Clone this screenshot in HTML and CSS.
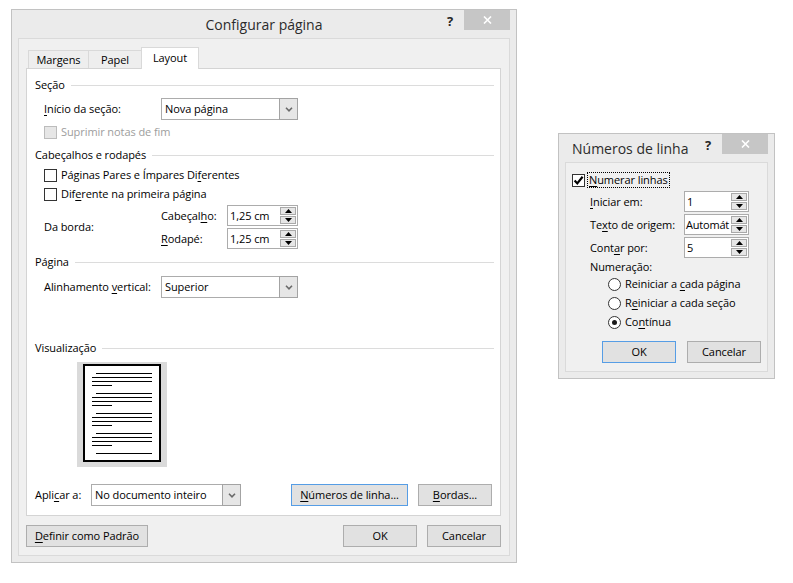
FILE: index.html
```html
<!DOCTYPE html>
<html lang="pt-BR">
<head>
<meta charset="utf-8">
<title>Configurar página</title>
<link rel="stylesheet" href="styles.css">
</head>
<body>
<div class="win win-main">
  <div class="titlebar">
    <div class="title title-center">Configurar página</div>
    <div class="cap-help">?</div>
    <div class="cap-close"><svg width="9" height="8" viewBox="0 0 9 8"><path d="M1 0.5 L8 7.5 M8 0.5 L1 7.5" stroke="#fff" stroke-width="1.6"/></svg></div>
  </div>
  <div class="client client-main">
    <div class="tabs">
      <div class="tab tab-margens">Margens</div>
      <div class="tab tab-papel">Papel</div>
      <div class="tab tab-layout active">Layout</div>
    </div>
    <div class="panel">
      <div class="grp-h mt8">Seção</div>
      <div class="row indent mt5">
        <span class="lbl w117"><u>I</u>nício da seção:</span>
        <div class="combo w137"><span class="combo-text">Nova página</span><span class="dd-btn"><svg width="8" height="5" viewBox="0 0 8 5"><path d="M1 0.8 L4 3.8 L7 0.8" fill="none" stroke="#6a6a6a" stroke-width="1.6"/></svg></span></div>
      </div>
      <div class="chk-row indent mt4 disabled">
        <span class="chk chk-dis"></span><span>Suprimir notas de fim</span>
      </div>
      <div class="grp-h mt7">Cabeçalhos e rodapés</div>
      <div class="chk-row indent mt4">
        <span class="chk"></span><span>Páginas Pares e Ímpares Di<u>f</u>erentes</span>
      </div>
      <div class="chk-row indent mt3">
        <span class="chk"></span><span>Dif<u>e</u>rente na primeira página</span>
      </div>
      <div class="border-block indent mt3">
        <span class="lbl w117">Da borda:</span>
        <div class="spin-col">
          <div class="spin-row">
            <span class="lbl w66">Cabeçal<u>h</u>o:</span>
            <div class="spin w71"><span class="spin-text">1,25 cm</span><span class="spin-btns"><span class="sb"><svg width="7" height="4" viewBox="0 0 7 4"><path d="M0 4 L3.5 0 L7 4Z" fill="#000"/></svg></span><span class="sb"><svg width="7" height="4" viewBox="0 0 7 4"><path d="M0 0 L3.5 4 L7 0Z" fill="#000"/></svg></span></span></div>
          </div>
          <div class="spin-row">
            <span class="lbl w66"><u>R</u>odapé:</span>
            <div class="spin w71"><span class="spin-text">1,25 cm</span><span class="spin-btns"><span class="sb"><svg width="7" height="4" viewBox="0 0 7 4"><path d="M0 4 L3.5 0 L7 4Z" fill="#000"/></svg></span><span class="sb"><svg width="7" height="4" viewBox="0 0 7 4"><path d="M0 0 L3.5 4 L7 0Z" fill="#000"/></svg></span></span></div>
          </div>
        </div>
      </div>
      <div class="grp-h mt5">Página</div>
      <div class="row indent mt6">
        <span class="lbl w117">Alinhamento <u>v</u>ertical:</span>
        <div class="combo w137"><span class="combo-text">Superior</span><span class="dd-btn"><svg width="8" height="5" viewBox="0 0 8 5"><path d="M1 0.8 L4 3.8 L7 0.8" fill="none" stroke="#6a6a6a" stroke-width="1.6"/></svg></span></div>
      </div>
      <div class="grp-h mt42">Visualização</div>
      <div class="preview">
        <svg width="90" height="105" viewBox="0 0 90 105">
          <rect x="0" y="0" width="90" height="105" fill="#dadada"/>
          <rect x="7" y="3" width="76" height="96" fill="#fff" stroke="#000" stroke-width="2"/>
          <g fill="#000">
            <rect x="19" y="11" width="56" height="1"/><rect x="15" y="15" width="60" height="1"/><rect x="15" y="19" width="60" height="1"/><rect x="15" y="23" width="20" height="1"/>
            <rect x="19" y="31" width="56" height="1"/><rect x="15" y="35" width="60" height="1"/><rect x="15" y="39" width="60" height="1"/><rect x="15" y="43" width="20" height="1"/>
            <rect x="19" y="51" width="56" height="1"/><rect x="15" y="55" width="60" height="1"/><rect x="15" y="59" width="60" height="1"/><rect x="15" y="63" width="20" height="1"/>
            <rect x="19" y="71" width="56" height="1"/><rect x="15" y="75" width="60" height="1"/><rect x="15" y="79" width="60" height="1"/><rect x="15" y="83" width="20" height="1"/>
            <rect x="19" y="91" width="56" height="1"/>
          </g>
        </svg>
      </div>
      <div class="apply-row mt17">
        <span class="lbl w56">Apli<u>c</u>ar a:</span>
        <div class="combo w150"><span class="combo-text">No documento inteiro</span><span class="dd-btn"><svg width="8" height="5" viewBox="0 0 8 5"><path d="M1 0.8 L4 3.8 L7 0.8" fill="none" stroke="#6a6a6a" stroke-width="1.6"/></svg></span></div>
        <div class="btn btn-default w117 ml-num"><span><u>N</u>úmeros de linha...</span></div>
        <div class="btn w74 ml-bord"><span><u>B</u>ordas...</span></div>
      </div>
    </div>
    <div class="footer">
      <div class="btn w122"><span><u>D</u>efinir como Padrão</span></div>
      <div class="spacer"></div>
      <div class="btn w74">OK</div>
      <div class="btn w74">Cancelar</div>
    </div>
  </div>
</div>

<div class="win win-lines">
  <div class="titlebar">
    <div class="title title-left">Números de linha</div>
    <div class="cap-help">?</div>
    <div class="cap-close"><svg width="9" height="8" viewBox="0 0 9 8"><path d="M1 0.5 L8 7.5 M8 0.5 L1 7.5" stroke="#fff" stroke-width="1.6"/></svg></div>
  </div>
  <div class="client client-lines">
    <div class="chk-row mt9">
      <span class="chk"><svg width="11" height="11" viewBox="0 0 11 11"><path d="M1.6 5.4 L4.3 8.4 L9.6 1.8" fill="none" stroke="#000" stroke-width="2.2"/></svg></span><span class="focus"><u>N</u>umerar linhas</span>
    </div>
    <div class="ln-row mt3">
      <span class="lbl w94"><u>I</u>niciar em:</span>
      <div class="spin w65"><span class="spin-text">1</span><span class="spin-btns"><span class="sb"><svg width="7" height="4" viewBox="0 0 7 4"><path d="M0 4 L3.5 0 L7 4Z" fill="#000"/></svg></span><span class="sb"><svg width="7" height="4" viewBox="0 0 7 4"><path d="M0 0 L3.5 4 L7 0Z" fill="#000"/></svg></span></span></div>
    </div>
    <div class="ln-row mt2">
      <span class="lbl w94">Te<u>x</u>to de origem:</span>
      <div class="spin w65"><span class="spin-text spin-tight">Automát</span><span class="spin-btns"><span class="sb"><svg width="7" height="4" viewBox="0 0 7 4"><path d="M0 4 L3.5 0 L7 4Z" fill="#000"/></svg></span><span class="sb"><svg width="7" height="4" viewBox="0 0 7 4"><path d="M0 0 L3.5 4 L7 0Z" fill="#000"/></svg></span></span></div>
    </div>
    <div class="ln-row mt2">
      <span class="lbl w94">Cont<u>a</u>r por:</span>
      <div class="spin w65"><span class="spin-text">5</span><span class="spin-btns"><span class="sb"><svg width="7" height="4" viewBox="0 0 7 4"><path d="M0 4 L3.5 0 L7 4Z" fill="#000"/></svg></span><span class="sb"><svg width="7" height="4" viewBox="0 0 7 4"><path d="M0 0 L3.5 4 L7 0Z" fill="#000"/></svg></span></span></div>
    </div>
    <div class="plain-row ln-indent mt1">Numeração:</div>
    <div class="radio-row mt1"><span class="radio"></span><span>Reiniciar a <u>c</u>ada página</span></div>
    <div class="radio-row mt3"><span class="radio"></span><span>R<u>e</u>iniciar a cada seção</span></div>
    <div class="radio-row mt3"><span class="radio on"></span><span>Co<u>n</u>tínua</span></div>
    <div class="ln-buttons">
      <div class="btn btn-default w74">OK</div>
      <div class="btn w74">Cancelar</div>
    </div>
  </div>
</div>
</body>
</html>
```

FILE: styles.css
```css
* { box-sizing: border-box; }
html, body { margin: 0; padding: 0; background: #fff; }
body {
  width: 793px; height: 583px; position: relative; overflow: hidden;
  font-family: "Open Sans", "Noto Sans", sans-serif;
  font-size: 11px; line-height: 16px; color: #000;
  letter-spacing: -0.08px;
}
u { text-decoration: underline; text-underline-offset: 2px; text-decoration-thickness: 1px; }

/* windows */
.win {
  position: absolute;
  background: #ebebeb;
  border: 1px solid #c2c2c2;
  padding: 0 6px 6px;
  display: flex; flex-direction: column;
}
.win-main { left: 11px; top: 9px; width: 506px; height: 554px; }
.win-lines { left: 558px; top: 133px; width: 217px; height: 246px; }

.titlebar { height: 28px; flex: none; display: flex; align-items: flex-start; }
.title { flex: 1; font-size: 14px; line-height: 28px; color: #2b2b2b; padding-top: 1px; white-space: nowrap; letter-spacing: 0; }
.title-center { text-align: center; padding-left: 70px; }
.title-left { padding-left: 7px; }
.cap-help {
  width: 20px; height: 20px; margin-top: 1px; margin-right: 4px;
  font-size: 13px; font-weight: 700; line-height: 20px; text-align: center; color: #262626;
}
.cap-close {
  width: 46px; height: 20px; background: #c6c6c6;
  display: flex; align-items: center; justify-content: center;
}

.client { flex: 1; background: #f0f0f0; border: 1px solid #dadada; }
.client-main { padding: 8px 8px 0 7px; display: flex; flex-direction: column; }
.client-lines { padding: 0 0 0 6px; }

/* tabs */
.tabs { height: 21px; display: flex; align-items: flex-end; padding-left: 2px; }
.tab {
  height: 18px; background: #eeeeee; border: 1px solid #d9d9d9; border-bottom: none;
  text-align: center; line-height: 17px; color: #000;
}
.tab + .tab { margin-left: -1px; }
.tab-margens { width: 61px; }
.tab-papel { width: 54px; }
.tab-layout { width: 58px; }
.tab.active {
  height: 22px; background: #fff; line-height: 20px;
  margin-bottom: -1px; position: relative; z-index: 1;
}

.panel {
  width: 475px; height: 448px; background: #fff;
  border: 1px solid #d4d4d4; padding: 0 6px 0 8px;
}

.grp-h { display: flex; align-items: center; height: 16px; gap: 6px; white-space: nowrap; }
.grp-h::after { content: ""; flex: 1; height: 1px; background: #dcdcdc; }

.mt1 { margin-top: 1px; } .mt2 { margin-top: 2px; } .mt3 { margin-top: 3px; } .mt4 { margin-top: 4px; }
.mt5 { margin-top: 5px; } .mt6 { margin-top: 6px; } .mt7 { margin-top: 7px; } .mt8 { margin-top: 8px; }
.mt9 { margin-top: 9px; } .mt17 { margin-top: 17px; } .mt42 { margin-top: 42px; }

.indent { padding-left: 9px; }
.row { display: flex; align-items: center; height: 22px; }
.lbl { white-space: nowrap; flex: none; }
.w56 { width: 56px; } .w65 { width: 65px; } .w66 { width: 66px; } .w71 { width: 71px; }
.w74 { width: 74px; } .w94 { width: 94px; } .w117 { width: 117px; } .w122 { width: 122px; }
.w137 { width: 137px; } .w150 { width: 150px; }

/* combo */
.combo {
  height: 22px; background: #fff; border: 1px solid #acacac;
  display: flex; align-items: stretch; flex: none;
}
.combo-text { flex: 1; padding-left: 3px; line-height: 20px; white-space: nowrap; overflow: hidden; }
.dd-btn {
  width: 19px; margin: -1px -1px -1px 0;
  background: #e6e6e6; border: 1px solid #a3a3a3;
  display: flex; align-items: center; justify-content: center;
}

/* checkbox */
.chk-row { display: flex; align-items: center; height: 16px; gap: 4px; white-space: nowrap; }
.chk {
  width: 13px; height: 13px; border: 1px solid #333; background: #fff; flex: none;
  display: flex; align-items: center; justify-content: center;
}
.chk-dis { border-color: #bcbcbc; background: #e6e6e6; }
.disabled { color: #9d9d9d; }
.focus { outline: 1px dotted #000; outline-offset: 0; padding: 0 1px; margin-left: -1px; line-height: 14px; }

/* spin */
.border-block { display: flex; align-items: center; }
.spin-col { display: flex; flex-direction: column; gap: 2px; }
.spin-row { display: flex; align-items: center; height: 21px; }
.spin {
  height: 21px; background: #fff; border: 1px solid #acacac;
  display: flex; align-items: stretch; flex: none;
}
.spin-text { flex: 1; padding-left: 2px; line-height: 19px; white-space: nowrap; overflow: hidden; }
.spin-tight { padding-left: 1px; letter-spacing: -0.2px; }
.spin-btns { width: 17px; display: flex; flex-direction: column; padding: 1px 1px 1px 0; gap: 1px; }
.sb {
  flex: 1; background: #e6e6e6; border: 1px solid #a9a9a9;
  display: flex; align-items: center; justify-content: center;
}

/* preview */
.preview { margin-top: 6px; margin-left: 42px; width: 90px; height: 105px; }
.preview svg { display: block; }

/* apply row */
.apply-row { display: flex; align-items: center; height: 22px; }
.ml-num { margin-left: 50px; }
.ml-bord { margin-left: 10px; }

/* buttons */
.btn {
  height: 22px; flex: none; background: #e1e1e1; border: 1px solid #adadad;
  display: flex; align-items: center; justify-content: center; white-space: nowrap;
}
.btn-default { border-color: #569de5; }

.footer { display: flex; margin-top: 9px; gap: 10px; }
.spacer { flex: 1; }

/* line numbers dialog */
.ln-row { display: flex; align-items: center; height: 21px; padding-left: 18px; }
.ln-indent { padding-left: 18px; }
.plain-row { height: 16px; white-space: nowrap; }
.radio-row { display: flex; align-items: center; height: 16px; gap: 4px; padding-left: 36px; white-space: nowrap; }
.radio {
  width: 13px; height: 13px; border: 1px solid #333; border-radius: 50%; background: #fff; flex: none;
  display: flex; align-items: center; justify-content: center;
}
.radio.on::after { content: ""; width: 5px; height: 5px; border-radius: 50%; background: #1a1a1a; }
.ln-buttons { display: flex; gap: 11px; margin-top: 11px; padding-left: 30px; }
```
